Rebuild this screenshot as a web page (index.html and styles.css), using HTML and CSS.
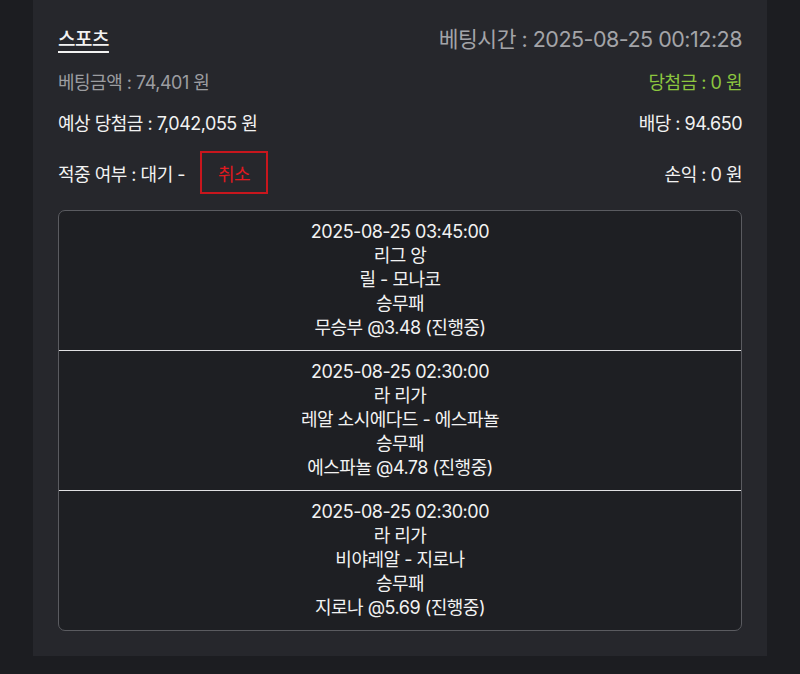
FILE: index.html
```html
<!DOCTYPE html>
<html lang="ko">
<head>
    <meta charset="UTF-8">
    <meta name="viewport" content="width=device-width, initial-scale=1.0">
    <title>베팅내역</title>
    <link rel="stylesheet" href="styles.css">
</head>
<body>
    <section class="bet-card">
        <div class="row row-head">
            <span class="bet-type">스포츠</span>
            <span class="bet-time">베팅시간 : 2025-08-25 00:12:28</span>
        </div>
        <div class="row row-info">
            <span class="muted">베팅금액 : 74,401 원</span>
            <span class="win">당첨금 : 0 원</span>
        </div>
        <div class="row row-info">
            <span>예상 당첨금 : 7,042,055 원</span>
            <span>배당 : 94.650</span>
        </div>
        <div class="row row-status">
            <span class="status">적중 여부 : 대기 - <button class="cancel-btn">취소</button></span>
            <span>손익 : 0 원</span>
        </div>
        <ul class="games">
            <li>
                <p>2025-08-25 03:45:00</p>
                <p>리그 앙</p>
                <p>릴 - 모나코</p>
                <p>승무패</p>
                <p>무승부 @3.48 (진행중)</p>
            </li>
            <li>
                <p>2025-08-25 02:30:00</p>
                <p>라 리가</p>
                <p>레알 소시에다드 - 에스파뇰</p>
                <p>승무패</p>
                <p>에스파뇰 @4.78 (진행중)</p>
            </li>
            <li>
                <p>2025-08-25 02:30:00</p>
                <p>라 리가</p>
                <p>비야레알 - 지로나</p>
                <p>승무패</p>
                <p>지로나 @5.69 (진행중)</p>
            </li>
        </ul>
    </section>
</body>
</html>
```

FILE: styles.css
```css
* {
    margin: 0;
    padding: 0;
    box-sizing: border-box;
}
body {
    font-family: Inter, "Noto Sans CJK KR", sans-serif;
    background-color: #1c1d21;
    color: #f2f2f2;
    font-size: 18px;
    letter-spacing: -0.5px;
    min-height: 674px;
}
.bet-card {
    margin: 0 33px;
    background-color: #26272c;
    padding: 20px 25px 25px;
}
.row {
    display: flex;
    justify-content: space-between;
    align-items: center;
}
.row-head {
    height: 34px;
}
.bet-type {
    font-size: 19px;
    font-weight: 500;
    text-decoration: underline;
    text-underline-offset: 5px;
    text-decoration-thickness: 2px;
}
.bet-time {
    font-size: 21.5px;
    color: #a3a4a8;
}
.row-info {
    height: 26px;
    margin-top: 14px;
}
.row-info + .row-info {
    margin-top: 15px;
}
.muted {
    color: #9c9da1;
}
.win {
    color: #8cc63f;
}
.row-status {
    height: 43px;
    margin-top: 16px;
}
.status {
    display: flex;
    align-items: center;
}
.cancel-btn {
    margin-left: 15px;
    width: 68px;
    height: 43px;
    background: transparent;
    border: 2px solid #c8161d;
    color: #e0191f;
    font-family: inherit;
    font-size: 18px;
    letter-spacing: -0.5px;
}
.games {
    list-style: none;
    margin-top: 16px;
    border: 1px solid #5a5b60;
    border-radius: 7px;
    background-color: #1e1f23;
    overflow: hidden;
}
.games li {
    padding: 9px 0 10px;
    text-align: center;
    line-height: 24px;
}
.games li + li {
    border-top: 1px solid #e0e0e2;
}
```
